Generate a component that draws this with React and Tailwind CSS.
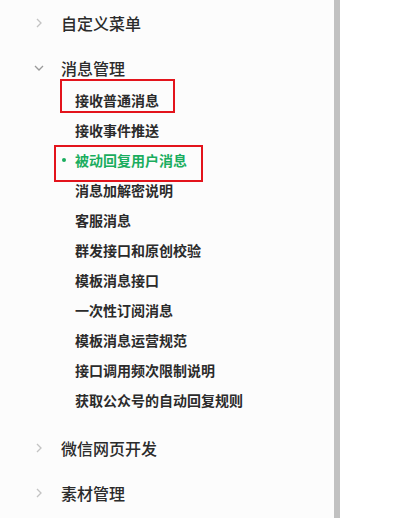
import React from 'react';

const subItems = [
  { label: '接收普通消息', boxed: 'a' },
  { label: '接收事件推送' },
  { label: '被动回复用户消息', active: true, boxed: 'b' },
  { label: '消息加解密说明' },
  { label: '客服消息' },
  { label: '群发接口和原创校验' },
  { label: '模板消息接口' },
  { label: '一次性订阅消息' },
  { label: '模板消息运营规范' },
  { label: '接口调用频次限制说明' },
  { label: '获取公众号的自动回复规则' },
];

const ChevronRight = () => (
  <svg width="6" height="10" viewBox="0 0 6 10" fill="none" className="shrink-0">
    <path d="M1 1l4 4-4 4" stroke="#c3c3c3" strokeWidth="1.3" />
  </svg>
);

const ChevronDown = () => (
  <svg width="10" height="6" viewBox="0 0 10 6" fill="none" className="shrink-0">
    <path d="M1 1l4 4 4-4" stroke="#9a9a9a" strokeWidth="1.3" />
  </svg>
);

const TopItem = ({ label, open }) => (
  <div className="flex h-[45px] items-center text-[16px] font-medium text-[#2b2b2b]">
    <div className="flex w-[61px] justify-start pl-[34px]">
      {open ? <ChevronDown /> : <span className="pl-[2px]"><ChevronRight /></span>}
    </div>
    <span>{label}</span>
  </div>
);

const SubItem = ({ item }) => (
  <li className="relative flex h-[30px] items-center text-[14px] font-semibold">
    {item.boxed === 'a' && (
      <div className="absolute left-[60px] top-[-6px] h-[34px] w-[115px] border-2 border-[#e3141c]" />
    )}
    {item.boxed === 'b' && (
      <div className="absolute left-[54px] top-0 h-[37px] w-[149px] border-2 border-[#e3141c]" />
    )}
    <div className="flex w-[75px] justify-start pl-[62px]">
      {item.active && <span className="h-[4px] w-[4px] rounded-full bg-[#1aad5e]" />}
    </div>
    <span className={item.active ? 'font-bold text-[#1aad5e]' : 'text-[#2b2b2b]'}>{item.label}</span>
  </li>
);

export default function App() {
  return (
    <div
      className="flex h-[518px] w-[411px] overflow-hidden bg-white"
      style={{ fontFamily: '"Noto Sans CJK SC", "Microsoft YaHei", sans-serif' }}
    >
      <div className="w-[334px] bg-[#fcfcfc]">
        <TopItem label="自定义菜单" />
        <TopItem label="消息管理" open />
        <ul className="-mt-[5px] mb-[10px]">
          {subItems.map((item) => (
            <SubItem key={item.label} item={item} />
          ))}
        </ul>
        <TopItem label="微信网页开发" />
        <TopItem label="素材管理" />
      </div>
      <div className="w-[6px] bg-[#c1c1c1]" />
      <div className="flex-1 bg-white" />
    </div>
  );
}
